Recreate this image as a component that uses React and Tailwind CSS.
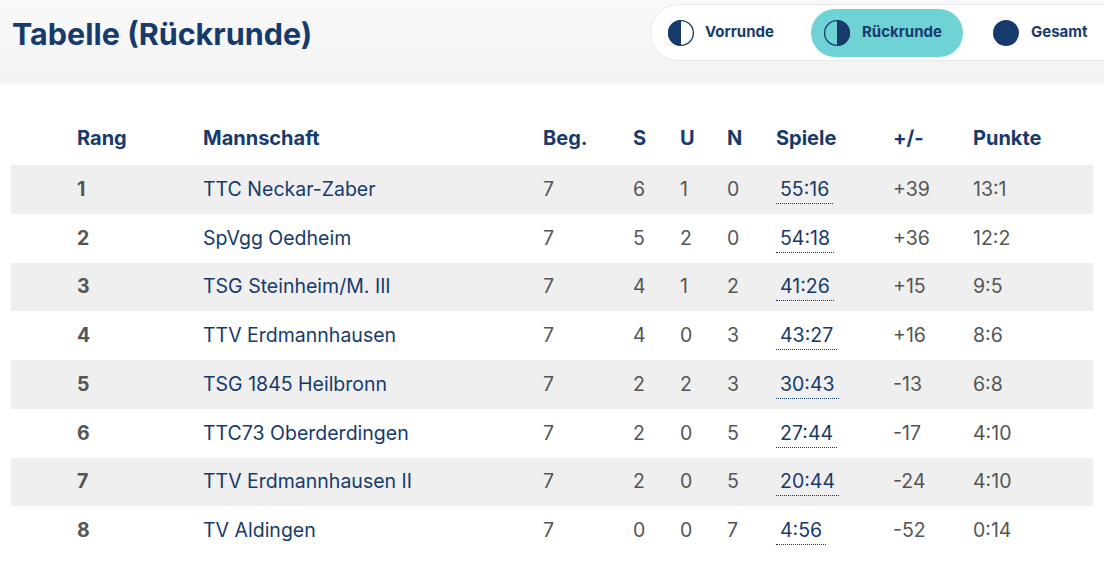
import React from 'react';

const rows = [
  { rang: 1, team: 'TTC Neckar-Zaber', beg: 7, s: 6, u: 1, n: 0, spiele: '55:16', diff: '+39', punkte: '13:1' },
  { rang: 2, team: 'SpVgg Oedheim', beg: 7, s: 5, u: 2, n: 0, spiele: '54:18', diff: '+36', punkte: '12:2' },
  { rang: 3, team: 'TSG Steinheim/M. III', beg: 7, s: 4, u: 1, n: 2, spiele: '41:26', diff: '+15', punkte: '9:5' },
  { rang: 4, team: 'TTV Erdmannhausen', beg: 7, s: 4, u: 0, n: 3, spiele: '43:27', diff: '+16', punkte: '8:6' },
  { rang: 5, team: 'TSG 1845 Heilbronn', beg: 7, s: 2, u: 2, n: 3, spiele: '30:43', diff: '-13', punkte: '6:8' },
  { rang: 6, team: 'TTC73 Oberderdingen', beg: 7, s: 2, u: 0, n: 5, spiele: '27:44', diff: '-17', punkte: '4:10' },
  { rang: 7, team: 'TTV Erdmannhausen II', beg: 7, s: 2, u: 0, n: 5, spiele: '20:44', diff: '-24', punkte: '4:10' },
  { rang: 8, team: 'TV Aldingen', beg: 7, s: 0, u: 0, n: 7, spiele: '4:56', diff: '-52', punkte: '0:14' },
];

// half / full moon icons for the round switch
const RoundIcon = ({ type }) => (
  <svg width="28" height="28" viewBox="0 0 28 28">
    {type === 'full' ? (
      <circle cx="14" cy="14" r="13" fill="#173a6c" />
    ) : (
      <>
        <circle cx="14" cy="14" r="12.4" fill="none" stroke="#173a6c" strokeWidth="1.3" />
        {type === 'left' ? (
          <path d="M14 1 A13 13 0 0 0 14 27 Z" fill="#173a6c" />
        ) : (
          <path d="M14 1 A13 13 0 0 1 14 27 Z" fill="#173a6c" />
        )}
      </>
    )}
  </svg>
);

const cols = 'grid grid-cols-[66px_126px_340px_90px_47px_47px_49px_117px_80px_1fr] items-center';

export default function App() {
  return (
    <div className="w-[1104px] h-[565px] overflow-hidden bg-white" style={{ fontFamily: 'Inter, "Noto Sans", sans-serif' }}>
      <div className="flex h-[82px] bg-gradient-to-b from-[#f9f9f9] to-[#f3f3f3] shadow-[0_1px_3px_rgba(0,0,0,0.06)]">
        <h1 className="pl-3 pt-[11px] text-[30.5px] font-bold text-[#173a6c]">Tabelle (Rückrunde)</h1>
        <div className="ml-auto mt-1 -mr-[40px] flex h-[57px] w-[494px] items-center rounded-full border border-[#e8e8e8] bg-white pl-[4px] text-[15px] font-bold text-[#173a6c]">
          <button className="flex h-12 w-[152px] items-center gap-[10px] rounded-full pl-3">
            <RoundIcon type="left" />
            Vorrunde
          </button>
          <button className="ml-1 flex h-12 w-[152px] items-center gap-[11px] rounded-full bg-[#6fd3d6] pl-3">
            <RoundIcon type="right" />
            Rückrunde
          </button>
          <button className="ml-[17px] flex h-12 items-center gap-[11px] rounded-full pl-3">
            <RoundIcon type="full" />
            Gesamt
          </button>
        </div>
      </div>

      <div className="mx-[11px] mt-[31px]">
        <div className={`${cols} h-[48px] pt-[2px] text-[20px] font-bold text-[#173a6c]`}>
          <div />
          <div>Rang</div>
          <div>Mannschaft</div>
          <div>Beg.</div>
          <div>S</div>
          <div>U</div>
          <div>N</div>
          <div>Spiele</div>
          <div>+/-</div>
          <div>Punkte</div>
        </div>
        <div className="mt-1">
          {rows.map((r, i) => (
            <div key={r.rang} className={`${cols} h-[48.75px] text-[19.5px] text-[#555555] ${i % 2 === 0 ? 'bg-[#efefef]' : ''}`}>
              <div />
              <div className="font-bold">{r.rang}</div>
              <div className="text-[#173a6c]">{r.team}</div>
              <div>{r.beg}</div>
              <div>{r.s}</div>
              <div>{r.u}</div>
              <div>{r.n}</div>
              <div>
                <span className="inline-block border-b border-dotted border-[#173a6c] px-1 leading-[27px] text-[#173a6c]">{r.spiele}</span>
              </div>
              <div>{r.diff}</div>
              <div>{r.punkte}</div>
            </div>
          ))}
        </div>
      </div>
    </div>
  );
}
